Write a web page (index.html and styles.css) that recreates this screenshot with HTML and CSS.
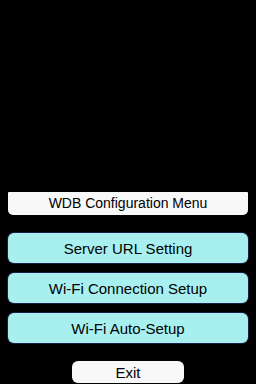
FILE: index.html
```html
<!DOCTYPE html>
<html lang="en">
<head>
    <meta charset="UTF-8">
    <meta name="viewport" content="width=device-width, initial-scale=1.0">
    <title>WDB Configuration Menu</title>
    <link rel="stylesheet" href="styles.css">
</head>
<body>
    <div class="screen">
        <div class="title-bar">WDB Configuration Menu</div>

        <div class="menu">
            <button class="menu-button">Server URL Setting</button>
            <button class="menu-button">Wi-Fi Connection Setup</button>
            <button class="menu-button">Wi-Fi Auto-Setup</button>
        </div>

        <button class="exit-button">Exit</button>
    </div>
</body>
</html>
```

FILE: styles.css
```css
html, body {
    margin: 0;
    padding: 0;
    background: #000;
}
.screen {
    width: 256px;
    height: 384px;
    display: flex;
    flex-direction: column;
    justify-content: flex-end;
    align-items: center;
    padding: 0 8px 1px;
    box-sizing: border-box;
    font-family: "Liberation Sans", Arial, sans-serif;
    font-size: 15px;
    color: #000;
}
.title-bar {
    width: 100%;
    height: 23px;
    line-height: 23px;
    background: #f8f8f8;
    text-align: center;
    font-size: 14px;
    border-radius: 1px 1px 5px 5px;
}
.menu {
    width: 100%;
    display: flex;
    flex-direction: column;
    gap: 10px;
    margin: 18px 0;
}
.menu-button {
    height: 30px;
    width: 100%;
    background: #a8f0f0;
    border: none;
    border-radius: 6px;
    box-shadow: 0 0 0 1px rgba(80, 90, 200, 0.35);
    font: inherit;
    color: #000;
    padding: 0;
}
.exit-button {
    width: 112px;
    height: 22px;
    background: #f8f8f8;
    border: none;
    border-radius: 6px;
    font: inherit;
    color: #000;
    padding: 0;
}
```
